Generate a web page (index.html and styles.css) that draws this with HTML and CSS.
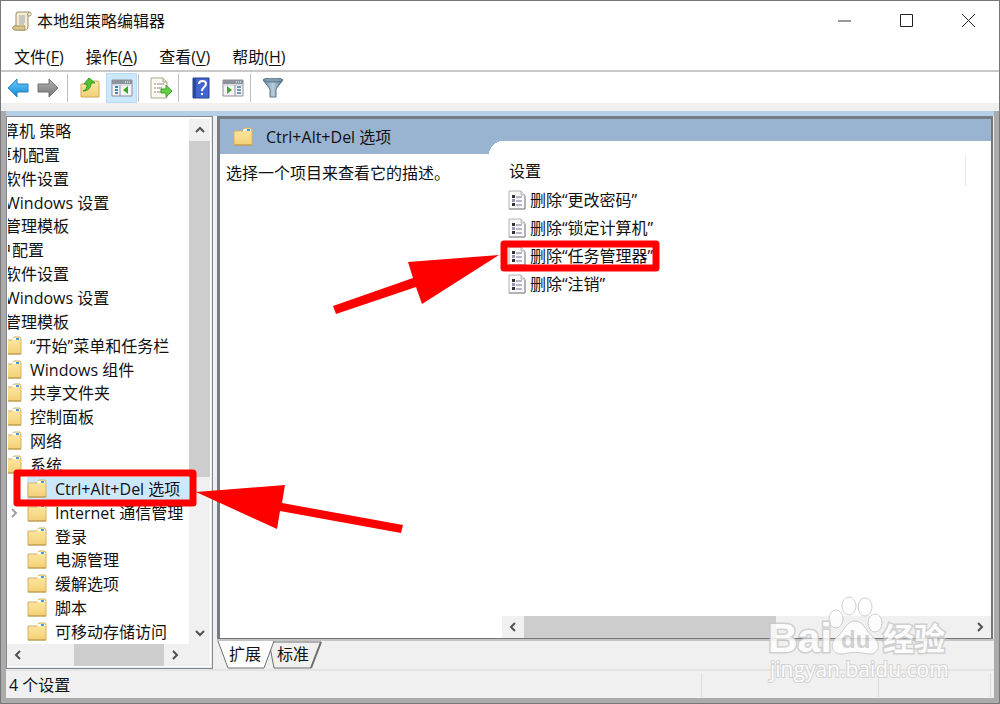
FILE: index.html
```
<!DOCTYPE html>
<html lang="zh-CN">
<head>
    <meta charset="UTF-8">
    <meta name="viewport" content="width=device-width, initial-scale=1.0">
    <title>本地组策略编辑器</title>
    <link rel="stylesheet" href="styles.css">
</head>
<body>
    <!-- shared icons -->
    <svg class="sprite" width="0" height="0" aria-hidden="true">
        <defs>
            <linearGradient id="gold" x1="0" y1="0" x2="0" y2="1">
                <stop offset="0" stop-color="#ffeaa8"/>
                <stop offset="1" stop-color="#f3cf73"/>
            </linearGradient>
            <linearGradient id="blue" x1="0" y1="0" x2="0" y2="1">
                <stop offset="0" stop-color="#6fd0fb"/>
                <stop offset="1" stop-color="#0b86d8"/>
            </linearGradient>
            <linearGradient id="grey" x1="0" y1="0" x2="0" y2="1">
                <stop offset="0" stop-color="#b5b5b5"/>
                <stop offset="1" stop-color="#747474"/>
            </linearGradient>
            <linearGradient id="steel" x1="0" y1="0" x2="1" y2="0">
                <stop offset="0" stop-color="#5f8199"/>
                <stop offset="0.5" stop-color="#b9d0de"/>
                <stop offset="1" stop-color="#4d6c83"/>
            </linearGradient>
            <symbol id="folder" viewBox="0 0 20 20">
                <path d="M1 4h9l2-3h6l1 2v15H1z" fill="url(#gold)" stroke="#d3b265"/>
                <path d="M11 2h7v2h-8z" fill="#fff"/>
                <path d="M14 2h3v2h-3z" fill="#4a9bdc"/>
                <path d="M1 18h18" stroke="#b8954a"/>
            </symbol>
            <symbol id="setting" viewBox="0 0 18 20">
                <path d="M1 1h12l4 4v14H1z" fill="#fbfbfb" stroke="#b0b0b0"/>
                <path d="M1 19h16V6" fill="none" stroke="#8f8f8f"/>
                <path d="M13 1v4h4" fill="#e4e4e4" stroke="#b0b0b0"/>
                <path d="M4 5h3v3H4zM4 13h3v3H4z" fill="#333"/>
                <path d="M4 9h3v3H4z" fill="#9a94b8"/>
                <path d="M8 7h6M8 11h6M8 15h6" stroke="#77719a"/>
            </symbol>
            <symbol id="panel" viewBox="0 0 22 18">
                <path d="M1 1h20v16H1z" fill="#f4f4f4" stroke="#8b929b"/>
                <path d="M1 1h20v4H1z" fill="#8b929b"/>
                <path d="M14 3h1M16 3h1M18 3h1" stroke="#fff"/>
                <path d="M2 6h18" stroke="#c3c8ce"/>
            </symbol>
            <symbol id="chev" viewBox="0 0 10 10">
                <path d="M3 1l4 4-4 4" fill="none" stroke="currentColor" stroke-width="2"/>
            </symbol>
        </defs>
    </svg>

    <div class="window">
        <header class="titlebar">
            <svg class="app-icon" width="20" height="20" viewBox="0 0 20 20">
                <path d="M5 1h12c3 0 3 4 0 4h-1v10c0 3-1 4-3 4H4c-4 0-4-4-1-4h1V3z" fill="#f5edd3" stroke="#9b8e6b"/>
                <path d="M3 15h10c-1 2 0 4 0 4H4c-4 0-4-4-1-4z" fill="#dbc88e" stroke="#a8935a"/>
                <path d="M16 5c-1-1 0-3 1-4" fill="none" stroke="#9b8e6b"/>
                <path d="M7 5h6M7 7h6M7 9h6M7 11h6M7 13h5" stroke="#9ea3a8"/>
            </svg>
            <h1>本地组策略编辑器</h1>
            <div class="caption">
                <button aria-label="最小化"><svg width="15" height="15"><path d="M1 8h13" stroke="#333"/></svg></button>
                <button aria-label="最大化"><svg width="15" height="15"><path d="M1.500 1.500h12v12h-12z" fill="none" stroke="#222"/></svg></button>
                <button aria-label="关闭"><svg width="15" height="15"><path d="M1 1l13 13M14 1L1 14" stroke="#222"/></svg></button>
            </div>
        </header>

        <nav class="menubar">
            <button>文件(<u>F</u>)</button>
            <button>操作(<u>A</u>)</button>
            <button>查看(<u>V</u>)</button>
            <button>帮助(<u>H</u>)</button>
        </nav>

        <div class="toolbar">
            <button aria-label="后退"><svg width="22" height="20"><path d="M1 10L10 1v5h11v8H10v5z" fill="url(#blue)" stroke="#2b7fb8"/></svg></button>
            <button aria-label="前进"><svg width="22" height="20"><path d="M21 10L12 1v5H1v8h11v5z" fill="url(#grey)" stroke="#707070"/></svg></button>
            <span class="sep first"></span>
            <button class="wide" aria-label="上一级">
                <svg width="20" height="22" viewBox="0 0 20 22">
                    <path d="M1 7h9l2-3h6l1 2v14H1z" fill="url(#gold)" stroke="#cda954"/>
                    <path d="M3 14c3-1 4-3 4-7H4l5-6 6 5h-4c0 5-3 8-8 8z" fill="#4fc531" stroke="#36982a"/>
                </svg>
            </button>
            <button class="wide active" aria-label="显示/隐藏控制台树">
                <svg width="22" height="18"><use href="#panel"/><path d="M9 6v11" stroke="#8b929b"/><path d="M4 8h3M4 11h3M4 14h3" stroke="#3d85c6" stroke-width="2"/><path d="M17 7v8l-5-4z" fill="#3da72c"/></svg>
            </button>
            <span class="sep"></span>
            <button class="wide" aria-label="导出列表">
                <svg width="22" height="22" viewBox="0 0 22 22">
                    <path d="M1 1h12l4 4v16H1z" fill="#fdfaf0" stroke="#aaa58f"/>
                    <path d="M13 1v4h4" fill="#e6e1cc" stroke="#aaa58f"/>
                    <path d="M4 7h2M4 11h2M4 15h2M7 7h7M7 11h5M7 15h4" stroke="#8d8a9c"/>
                    <path d="M11 12h5V8l6 6-6 6v-4h-5z" fill="#65cf45" stroke="#3fa42b"/>
                </svg>
            </button>
            <span class="sep"></span>
            <button class="wide" aria-label="帮助">
                <svg width="18" height="22" viewBox="0 0 18 22">
                    <path d="M1 1h16v20H1z" fill="#4266cf" stroke="#253f92"/>
                    <path d="M1 1h3v20H1z" fill="#2b479e"/>
                    <path d="M7 7c0-4 7-4 7 0 0 3-4 3-4 7" fill="none" stroke="#fff" stroke-width="2"/>
                    <path d="M9 16h2v2H9z" fill="#fff"/>
                </svg>
            </button>
            <button class="wide" aria-label="显示/隐藏操作窗格">
                <svg width="22" height="18"><use href="#panel"/><path d="M13 6v11" stroke="#8b929b"/><path d="M15 8h4M15 11h4M15 14h4" stroke="#6b98bd" stroke-width="2"/><path d="M5 7v8l5-4z" fill="#3da72c"/></svg>
            </button>
            <span class="sep"></span>
            <button class="wide" aria-label="筛选器">
                <svg width="22" height="20" viewBox="0 0 22 20">
                    <path d="M1 2l7 9v8h6v-8l7-9z" fill="url(#steel)" stroke="#5a7488"/>
                    <ellipse cx="11" cy="2" rx="10" ry="2" fill="#7f9db2" stroke="#5a7488"/>
                </svg>
            </button>
        </div>

        <main class="frame">
            <div class="panes">
                <aside class="tree">
                    <div class="tree-view">
                        <ul class="tree-list">
                            <li class="l0"><svg class="icon"><use href="#folder"/></svg>本地计算机 策略</li>
                            <li class="l1"><svg class="icon"><use href="#folder"/></svg>计算机配置</li>
                            <li class="l2"><svg class="icon"><use href="#folder"/></svg>软件设置</li>
                            <li class="l2"><svg class="icon"><use href="#folder"/></svg>Windows 设置</li>
                            <li class="l2"><svg class="icon"><use href="#folder"/></svg>管理模板</li>
                            <li class="l1"><svg class="icon"><use href="#folder"/></svg>用户配置</li>
                            <li class="l2"><svg class="icon"><use href="#folder"/></svg>软件设置</li>
                            <li class="l2"><svg class="icon"><use href="#folder"/></svg>Windows 设置</li>
                            <li class="l2"><svg class="icon"><use href="#folder"/></svg>管理模板</li>
                            <li class="l3"><svg class="icon"><use href="#folder"/></svg>“开始”菜单和任务栏</li>
                            <li class="l3"><svg class="icon"><use href="#folder"/></svg>Windows 组件</li>
                            <li class="l3"><svg class="icon"><use href="#folder"/></svg>共享文件夹</li>
                            <li class="l3"><svg class="icon"><use href="#folder"/></svg>控制面板</li>
                            <li class="l3"><svg class="icon"><use href="#folder"/></svg>网络</li>
                            <li class="l3"><svg class="icon"><use href="#folder"/></svg>系统</li>
                            <li class="l4 selected"><svg class="icon"><use href="#folder"/></svg><span>Ctrl+Alt+Del 选项</span></li>
                            <li class="l4"><svg class="expander"><use href="#chev"/></svg><svg class="icon"><use href="#folder"/></svg>Internet 通信管理</li>
                            <li class="l4"><svg class="icon"><use href="#folder"/></svg>登录</li>
                            <li class="l4"><svg class="icon"><use href="#folder"/></svg>电源管理</li>
                            <li class="l4"><svg class="icon"><use href="#folder"/></svg>缓解选项</li>
                            <li class="l4"><svg class="icon"><use href="#folder"/></svg>脚本</li>
                            <li class="l4"><svg class="icon"><use href="#folder"/></svg>可移动存储访问</li>
                        </ul>
                        <div class="vscroll">
                            <button aria-label="向上滚动"><svg class="chev up"><use href="#chev"/></svg></button>
                            <div class="thumb"></div>
                            <button class="end" aria-label="向下滚动"><svg class="chev down"><use href="#chev"/></svg></button>
                        </div>
                    </div>
                    <div class="hscroll">
                        <button aria-label="向左滚动"><svg class="chev left"><use href="#chev"/></svg></button>
                        <div class="thumb"></div>
                        <button aria-label="向右滚动"><svg class="chev"><use href="#chev"/></svg></button>
                    </div>
                </aside>

                <section class="content">
                    <div class="detail">
                        <div class="description">
                            <h2><svg class="icon"><use href="#folder"/></svg>Ctrl+Alt+Del 选项</h2>
                            <p>选择一个项目来查看它的描述。</p>
                        </div>
                        <div class="results">
                            <div class="results-body">
                                <div class="column-head">设置</div>
                                <ul class="settings">
                                    <li><svg class="page"><use href="#setting"/></svg>删除“更改密码”</li>
                                    <li><svg class="page"><use href="#setting"/></svg>删除“锁定计算机”</li>
                                    <li><svg class="page"><use href="#setting"/></svg>删除“任务管理器”</li>
                                    <li><svg class="page"><use href="#setting"/></svg>删除“注销”</li>
                                </ul>
                            </div>
                            <div class="hscroll">
                                <button aria-label="向左滚动"><svg class="chev left"><use href="#chev"/></svg></button>
                                <div class="thumb"></div>
                                <button class="end" aria-label="向右滚动"><svg class="chev"><use href="#chev"/></svg></button>
                            </div>
                        </div>
                    </div>
                    <div class="tabs">
                        <svg class="tab-shapes" width="108" height="28">
                            <path d="M52 1h52L94 27H57z" fill="#f0f0f0" stroke="#6e6e6e"/>
                            <path d="M104 1L94 27" stroke="#6e6e6e" stroke-width="2"/>
                            <path d="M1 0l10 27h36L57 0z" fill="#fff"/>
                            <path d="M1 0l10 27h36L57 0" fill="none" stroke="#6e6e6e"/>
                        </svg>
                        <button>扩展</button>
                        <button>标准</button>
                    </div>
                </section>
            </div>

            <footer class="status">
                <span class="message">4 个设置</span>
                <span class="cell"></span>
                <span class="cell last"></span>
            </footer>
        </main>

        <!-- red boxes and arrows -->
        <svg class="marks" width="670" height="540">
            <g fill="none" stroke="#f00" stroke-width="7" stroke-linejoin="round">
                <path d="M504 244h152v24H504z"/>
                <path d="M17 473h176v30H17z"/>
            </g>
            <g fill="#f00">
                <path d="M499 255L422 304l-6-17-80 27-3-8 80-28-5-16z"/>
                <path d="M196 492l89-7-3 18 121 22-2 8-121-22-3 18z"/>
            </g>
        </svg>

        <svg class="watermark" width="190" height="90" viewBox="0 0 190 90">
            <g fill="#fff" stroke="#c4c4c4" stroke-width="1">
                <ellipse cx="69" cy="24" rx="7" ry="9"/>
                <ellipse cx="82" cy="11" rx="7" ry="9"/>
                <ellipse cx="98" cy="12" rx="7" ry="9"/>
                <ellipse cx="108" cy="28" rx="7" ry="9"/>
                <path d="M88 26c9 0 12 12 19 17 8 7 4 17-6 16-8-2-17-2-25 0-12 1-14-11-6-17 7-5 9-16 18-16z"/>
            </g>
            <g class="wm-outline">
                <text x="1" y="57" class="wm-bai">Bai</text>
                <text x="116" y="55" class="wm-cn">经验</text>
            </g>
            <text x="74" y="53" class="wm-du">du</text>
            <text x="3" y="82" class="wm-url">jingyan.baidu.com</text>
        </svg>
    </div>
</body>
</html>
```
FILE: styles.css
```
* {
    box-sizing: border-box;
}
body {
    margin: 0;
    font-family: "Open Sans", "Noto Sans CJK SC", sans-serif;
    font-size: 16px;
    line-height: 24px;
    color: #111;
    background: #777;
}
h1, h2, p, ul {
    margin: 0;
    padding: 0;
    font-size: 16px;
    font-weight: normal;
}
ul {
    list-style: none;
}
button {
    padding: 0;
    border: none;
    background: none;
    font: inherit;
    color: inherit;
}
svg {
    display: block;
    flex: none;
}
.sprite {
    position: absolute;
}
.window {
    position: relative;
    display: flex;
    flex-direction: column;
    min-height: 100vh;
    border: 1px solid #777;
    background: #fff;
    overflow: hidden;
}

/* title and menu */
.titlebar {
    display: flex;
    align-items: center;
    height: 39px;
    padding-left: 11px;
}
.titlebar h1 {
    flex: 1;
    margin-left: 5px;
}
.caption {
    display: flex;
}
.caption button {
    display: flex;
    align-items: center;
    justify-content: center;
    width: 62px;
    height: 39px;
}
.menubar {
    display: flex;
    gap: 22px;
    height: 32px;
    padding: 4px 13px 0;
    border-bottom: 2px solid #c8c8c8;
}
.menubar u {
    text-underline-offset: 2px;
}

/* toolbar */
.toolbar {
    display: flex;
    align-items: center;
    height: 31px;
    padding: 1px 0 0 2px;
}
.toolbar button {
    display: flex;
    align-items: center;
    justify-content: center;
    width: 30px;
    height: 30px;
}
.toolbar .wide {
    width: 32px;
}
.toolbar .active {
    width: 31px;
    background: #cce8ff;
    border: 1px solid #b5dcfa;
}
.sep {
    width: 1px;
    height: 28px;
    margin: 0 6px 0 1px;
    background: #bdbdbd;
}
.first {
    margin-left: 4px;
}

/* panes */
.frame {
    flex: 1;
    display: flex;
    flex-direction: column;
    border-top: 8px solid #f0f0f0;
    background: #ababab;
    padding: 0 5px 5px;
}
.panes {
    flex: 1;
    display: flex;
    gap: 4px;
    padding-top: 5px;
    background: #f0f0f0;
    border-bottom: 2px solid #e4e4e4;
    box-shadow: inset 0 5px #b5cfe7;
}
.tree {
    display: flex;
    flex-direction: column;
    width: 207px;
    padding-right: 2px;
    border: 1px solid #828790;
    background: #fff;
    box-shadow: inset -1px -1px #e6e9ee;
}
.tree-view {
    flex: 1;
    display: flex;
    overflow: hidden;
}
.tree-list {
    flex: 1;
    display: flex;
    flex-direction: column;
    padding-top: 2px;
    margin-left: 1px;
    overflow: hidden;
}
.tree-list li {
    flex: 1;
    display: flex;
    align-items: center;
    gap: 8px;
    line-height: 22px;
    white-space: nowrap;
}
/* the tree is scrolled to the right, so the upper levels are cut off */
.l0 { margin-left: -81px; }
.l1 { margin-left: -56px; }
.l2 { margin-left: -31px; }
.l3 { margin-left: -6px; }
.l4 { margin-left: 19px; }
.selected {
    background: #cce8ff;
}
.icon {
    width: 20px;
    height: 20px;
}
.expander {
    width: 10px;
    height: 10px;
    margin-left: -18px;
    color: #a0a0a0;
}

/* scroll bars */
.vscroll, .hscroll {
    display: flex;
    background: #f0f0f0;
    color: #505050;
}
.vscroll {
    flex-direction: column;
    width: 21px;
    margin-top: 2px;
}
.hscroll {
    height: 22px;
    margin-bottom: 2px;
}
.vscroll button, .hscroll button {
    display: flex;
    align-items: center;
    justify-content: center;
    width: 22px;
    height: 22px;
}
.thumb {
    background: #cdcdcd;
}
.vscroll .thumb {
    height: 64%;
}
.end {
    margin-top: auto;
}
.hscroll .end {
    margin: 0 0 0 auto;
}
.tree .hscroll .thumb {
    width: 90px;
    margin-left: 45px;
}
.chev {
    width: 10px;
    height: 10px;
}
.up { transform: rotate(-90deg); }
.down { transform: rotate(90deg); }
.left { transform: rotate(180deg); }

/* right side */
.content {
    flex: 1;
    display: flex;
    flex-direction: column;
    min-width: 0;
}
.detail {
    flex: 1;
    display: flex;
    margin-right: 1px;
    border: 3px solid #747c84;
    border-right: 2px solid #747474;
    border-bottom: 1px solid #747474;
    background: linear-gradient(#99b4d1 22px, #fff 22px);
}
.description {
    width: 269px;
}
.description h2 {
    display: flex;
    align-items: center;
    gap: 13px;
    height: 35px;
    padding-left: 13px;
    background: #99b4d1;
}
.description p {
    padding: 7px 6px;
}
.results {
    flex: 1;
    display: flex;
    flex-direction: column;
    margin-top: 22px;
    background: radial-gradient(circle at 14px 14px, #fff 14px, #99b4d1 14px) 0 0 / 14px 13px no-repeat;
}
.results-body {
    flex: 1;
    padding: 13px 25px 0 19px;
}
.column-head {
    height: 32px;
    padding: 5px 1px;
    border-right: 1px solid #e8e8e8;
}
.settings li {
    display: flex;
    align-items: center;
    gap: 4px;
    height: 28px;
}
.page {
    width: 18px;
    height: 20px;
}
.results .hscroll {
    margin: 0 0 0 13px;
}
.results .thumb {
    width: 252px;
}
.tabs {
    position: relative;
    display: flex;
    height: 30px;
    padding-left: 12px;
    gap: 16px;
    border-top: 2px solid #c4c4c4;
}
.tab-shapes {
    position: absolute;
    left: 0;
    top: 0;
}
.tabs button {
    position: relative;
    width: 32px;
    height: 26px;
}

/* status bar */
.status {
    display: flex;
    height: 27px;
    padding: 2px 3px 1px;
    background: #f0f0f0;
}
.message {
    flex: 1;
}
.cell {
    width: 177px;
    border-left: 1px solid #dcdcdc;
}
.last {
    width: 113px;
    border-right: 1px solid #dcdcdc;
}

/* things drawn over the window */
.marks {
    position: absolute;
    left: -1px;
    top: -1px;
    pointer-events: none;
}
.watermark {
    position: absolute;
    right: 42px;
    bottom: 18px;
    opacity: 0.8;
    pointer-events: none;
}
.wm-outline {
    fill: #fff;
    stroke: #c8c8c8;
    stroke-width: 3px;
    paint-order: stroke;
}
.wm-bai {
    font: bold 41px "Liberation Sans", sans-serif;
}
.wm-du {
    font: bold 24px "Liberation Sans", sans-serif;
    fill: #ccc;
}
.wm-cn {
    font: bold 31px "Noto Sans CJK SC", sans-serif;
}
.wm-url {
    font: 21px "Open Sans", sans-serif;
    fill: #fff;
    stroke: #ccc;
    stroke-width: 2px;
    paint-order: stroke;
}
```
